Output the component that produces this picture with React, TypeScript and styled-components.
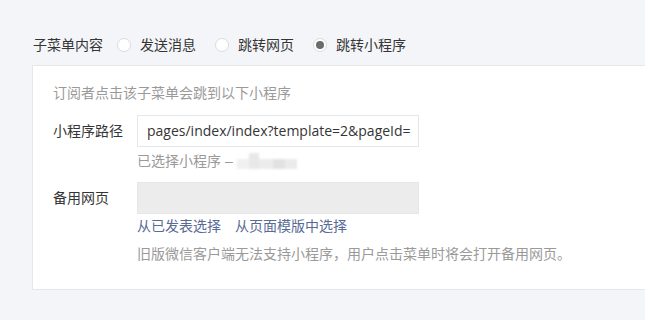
import React from "react";
import styled, { createGlobalStyle } from "styled-components";

const Global = createGlobalStyle`
  html, body { margin: 0; padding: 0; }
  body {
    background: #f4f5f9;
    font-family: "Helvetica Neue", "Liberation Sans", "Noto Sans CJK SC", sans-serif;
    font-size: 14px;
    color: #353535;
    overflow: hidden;
  }
`;

const Page = styled.div`
  width: 645px;
  height: 320px;
  padding: 33px 0 0 33px;
  box-sizing: border-box;
  overflow: hidden;
`;

const RadioRow = styled.div`
  display: flex;
  align-items: center;
  height: 24px;
  margin-bottom: 8px;
`;

const RowLabel = styled.span`
  line-height: 24px;
  margin-right: 14px;
`;

const RadioItem = styled.label`
  display: flex;
  align-items: center;
  margin-right: 19px;
  line-height: 24px;
`;

const RadioCircle = styled.span<{ $checked?: boolean }>`
  box-sizing: border-box;
  width: 14px;
  height: 14px;
  border-radius: 50%;
  border: 1px solid #dcdcdc;
  background: #fff;
  margin-right: 9px;
  display: flex;
  align-items: center;
  justify-content: center;
  &::after {
    content: "";
    display: ${(p) => (p.$checked ? "block" : "none")};
    width: 8px;
    height: 8px;
    border-radius: 50%;
    background: #6b6b6b;
  }
`;

const Panel = styled.div`
  margin-left: -1px;
  width: 640px;
  background: #fff;
  border: 1px solid #e4e8eb;
  padding: 17px 0 25px 20px;
  box-sizing: border-box;
`;

const Hint = styled.div`
  color: #9a9a9a;
  line-height: 20px;
  margin-bottom: 12px;
`;

const FormRow = styled.div`
  display: flex;
  align-items: flex-start;
`;

const FieldLabel = styled.div`
  width: 84px;
  flex: none;
  line-height: 32px;
`;

const Field = styled.div`
  display: flex;
  flex-direction: column;
`;

const TextInput = styled.div<{ $disabled?: boolean }>`
  box-sizing: border-box;
  width: 282px;
  height: 32px;
  border: 1px solid ${(p) => (p.$disabled ? "#e7e7e7" : "#e4e8eb")};
  background: ${(p) => (p.$disabled ? "#ececec" : "#fff")};
  padding: 0 9px;
  line-height: 30px;
  white-space: nowrap;
  overflow: hidden;
  color: #353535;
  font-family: "Open Sans", "Noto Sans CJK SC", sans-serif;
  font-size: 14px;
`;

const SubText = styled.div<{ $mt: number }>`
  color: #9a9a9a;
  line-height: 20px;
  margin-top: ${(p) => p.$mt}px;
  display: flex;
  align-items: center;
`;

const Mosaic = styled.span`
  display: inline-flex;
  align-items: flex-end;
  margin-left: 4px;
  height: 16px;
  filter: blur(1px);
`;

const Block = styled.span<{ $w: number; $h: number; $c: string }>`
  display: inline-block;
  width: ${(p) => p.$w}px;
  height: ${(p) => p.$h}px;
  background: ${(p) => p.$c};
`;

const Spacer = styled.div<{ $h: number }>`
  height: ${(p) => p.$h}px;
`;

const Links = styled.div`
  display: flex;
  gap: 14px;
  line-height: 20px;
  margin-top: 2px;
`;

const Link = styled.a`
  color: #576b95;
  text-decoration: none;
  cursor: pointer;
`;

export default function App() {
  return (
    <>
      <Global />
      <Page>
        <RadioRow>
          <RowLabel>子菜单内容</RowLabel>
          <RadioItem>
            <RadioCircle />
            发送消息
          </RadioItem>
          <RadioItem>
            <RadioCircle />
            跳转网页
          </RadioItem>
          <RadioItem>
            <RadioCircle $checked />
            跳转小程序
          </RadioItem>
        </RadioRow>
        <Panel>
          <Hint>订阅者点击该子菜单会跳到以下小程序</Hint>
          <FormRow>
            <FieldLabel>小程序路径</FieldLabel>
            <Field>
              <TextInput>pages/index/index?template=2&amp;pageId=</TextInput>
              <SubText $mt={4}>
                已选择小程序 –
                <Mosaic>
                  <Block $w={12} $h={10} $c="#f0f0f0" />
                  <Block $w={10} $h={16} $c="#e8e8e8" />
                  <Block $w={14} $h={10} $c="#ececec" />
                  <Block $w={12} $h={10} $c="#e2e2e2" />
                  <Block $w={12} $h={10} $c="#ebebeb" />
                </Mosaic>
              </SubText>
            </Field>
          </FormRow>
          <Spacer $h={11} />
          <FormRow>
            <FieldLabel>备用网页</FieldLabel>
            <Field>
              <TextInput $disabled />
              <Links>
                <Link>从已发表选择</Link>
                <Link>从页面模版中选择</Link>
              </Links>
              <SubText $mt={8}>旧版微信客户端无法支持小程序，用户点击菜单时将会打开备用网页。</SubText>
            </Field>
          </FormRow>
        </Panel>
      </Page>
    </>
  );
}
